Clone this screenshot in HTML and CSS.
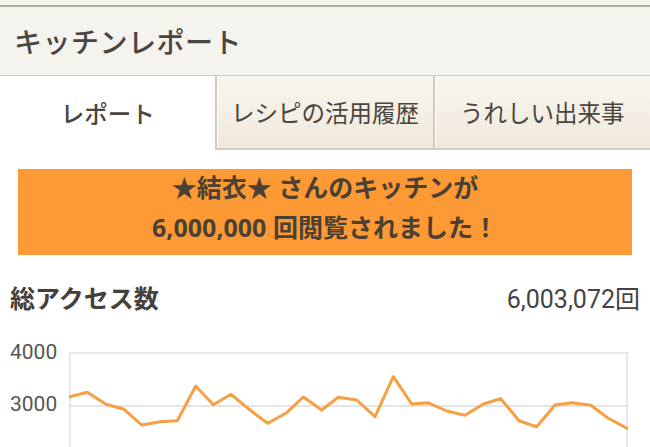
FILE: index.html
```html
<!DOCTYPE html>
<html lang="ja">
<head>
  <meta charset="UTF-8" />
  <meta name="viewport" content="width=device-width, initial-scale=1.0" />
  <title>キッチンレポート</title>
  <link rel="stylesheet" href="styles.css">
</head>
<body>
  <header class="page-header">
    <h1>キッチンレポート</h1>
  </header>
  <nav class="tabs">
    <a class="tab active">レポート</a>
    <a class="tab">レシピの活用履歴</a>
    <a class="tab">うれしい出来事</a>
  </nav>
  <main>
    <div class="banner">
      <p>★結衣★ さんのキッチンが</p>
      <p>6,000,000 回閲覧されました！</p>
    </div>
    <section class="access">
      <div class="access-head">
        <h2>総アクセス数</h2>
        <span class="total">6,003,072回</span>
      </div>
      <div class="chart">
        <div class="axis">
          <span>4000</span>
          <span>3000</span>
        </div>
        <svg class="plot" width="560" height="100" viewBox="0 0 560 100">
          <line x1="0" y1="1" x2="560" y2="1" stroke="#e8e8e8" stroke-width="2" />
          <line x1="1" y1="0" x2="1" y2="100" stroke="#e8e8e8" stroke-width="2" />
          <line x1="558" y1="0" x2="558" y2="100" stroke="#e8e8e8" stroke-width="2" />
          <line x1="0" y1="54" x2="560" y2="54" stroke="#dcdcdc" stroke-width="1.5" />
          <polyline fill="none" stroke="#f7a043" stroke-width="3" stroke-linejoin="round" stroke-linecap="round"
            points="1,44.7 18.3,40.3 37,52.3 55,57.3 72.7,73 91,69.7 108.3,68.7 126.7,34 144.3,52.7 162,42.3 181,58 198.7,71.3 217.7,60.7 234.3,45 252.7,58 269.3,45.3 287.7,48 306,64.7 324.3,24.7 342.7,52 358.7,50.7 377.7,59 396,63.3 414.3,52 431.7,46.7 450.3,69 467.7,74.7 486,53 503.3,50.7 521.7,53.3 539.3,66.3 557.7,76.3" />
        </svg>
      </div>
    </section>
  </main>
</body>
</html>
```

FILE: styles.css
```css
body {
  margin: 0;
  padding: 0;
  background: #fff;
  color: #4a4540;
  font-family: 'Noto Sans CJK JP', sans-serif;
  overflow: hidden;
}
.page-header {
  background: #f5f3ee;
  border-top: 2px solid #b3afa8;
  margin-top: 5px;
  height: 68px;
  border-bottom: 1px solid #cdc9c1;
  display: flex;
  align-items: center;
  padding-left: 14px;
  box-shadow: 0 -5px 0 #f5f3ee;
}
.page-header h1 {
  margin: 0;
  font-size: 28px;
  font-weight: 500;
  letter-spacing: 0.5px;
  color: #4a4540;
}
.tabs {
  display: flex;
  height: 74px;
}
.tab {
  flex: 1;
  display: flex;
  align-items: center;
  justify-content: center;
  font-size: 23.5px;
  color: #4a4540;
  background: linear-gradient(#f8f6f0, #f0e9da);
  border-left: 2px solid #cfcbc3;
  border-bottom: 2px solid #d2cec6;
  box-shadow: inset 1px 0 0 #fff;
}
.tab.active {
  background: #fff;
  border: none;
  box-shadow: none;
  font-weight: 500;
}
main {
  padding: 19px 18px 0;
}
.banner {
  background: #fd9a35;
  height: 86px;
  box-sizing: border-box;
  padding-bottom: 10px;
  display: flex;
  flex-direction: column;
  justify-content: center;
  text-align: center;
  color: #4a4033;
  font-family: 'Open Sans', 'Noto Sans CJK JP', sans-serif;
  font-weight: bold;
  font-size: 25px;
}
.banner p {
  margin: 0;
  line-height: 40px;
}
.access {
  margin: 0 -8px;
}
.access-head {
  display: flex;
  justify-content: space-between;
  align-items: center;
  margin-top: 27px;
  height: 30px;
}
.access-head h2 {
  margin: 0;
  font-size: 25px;
  font-weight: bold;
  color: #45403b;
}
.total {
  font-family: Roboto, 'Noto Sans CJK JP', sans-serif;
  font-size: 25px;
  color: #444;
}
.chart {
  display: flex;
  margin-top: 40px;
}
.axis {
  width: 59px;
  display: flex;
  flex-direction: column;
  gap: 30px;
  margin-top: -11px;
}
.axis span {
  font-family: Roboto, sans-serif;
  font-size: 21px;
  line-height: 22px;
  color: #555;
}
.plot {
  display: block;
}
```
